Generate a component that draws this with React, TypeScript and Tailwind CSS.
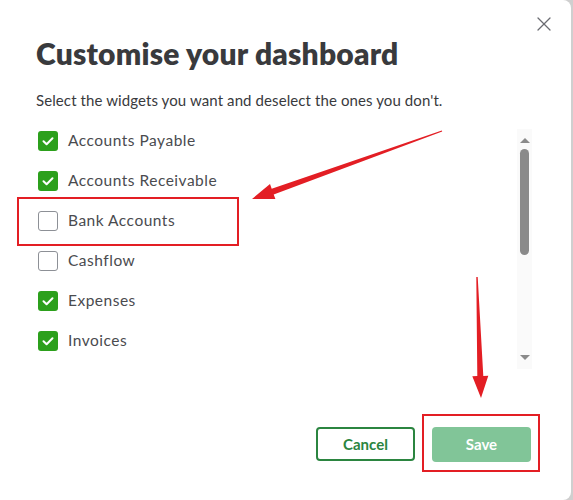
import { X } from 'lucide-react';

const widgets = [
  { label: 'Accounts Payable', checked: true },
  { label: 'Accounts Receivable', checked: true },
  { label: 'Bank Accounts', checked: false },
  { label: 'Cashflow', checked: false },
  { label: 'Expenses', checked: true },
  { label: 'Invoices', checked: true },
];

function Checkbox({ checked }: { checked: boolean }) {
  if (checked) {
    return (
      <div className="w-[20px] h-[20px] rounded-[3px] bg-[#2ca01c] flex items-center justify-center shrink-0">
        <svg width="20" height="20" viewBox="0 0 20 20">
          <path d="M5.5 10.2 L8.6 13.2 L14.5 7.2" fill="none" stroke="#fff" strokeWidth="2" strokeLinecap="round" strokeLinejoin="round" />
        </svg>
      </div>
    );
  }
  return <div className="w-[20px] h-[20px] rounded-[3px] border border-[#8d9096] bg-white shrink-0" />;
}

function Scrollbar() {
  return (
    <div className="w-[15px] h-[240px] mt-[8px] bg-[#fafafa] flex flex-col items-center shrink-0">
      <div className="mt-[9px] w-0 h-0 border-l-[5px] border-r-[5px] border-b-[5px] border-l-transparent border-r-transparent border-b-[#8a8a8a]" />
      <div className="mt-[6px] w-[9px] h-[106px] rounded-full bg-[#8a8a8a]" />
      <div className="flex-1" />
      <div className="mb-[9px] w-0 h-0 border-l-[5px] border-r-[5px] border-t-[5px] border-l-transparent border-r-transparent border-t-[#8a8a8a]" />
    </div>
  );
}

export default function App() {
  return (
    <div
      className="relative w-[573px] h-[500px] bg-[#cfcfcf] overflow-hidden"
      style={{ fontFamily: 'Lato, "Noto Sans", sans-serif' }}
    >
      <div className="relative w-[571px] h-[500px] bg-white rounded-r-[8px] pl-[36px] pr-[39px] pt-[35px] flex flex-col text-[#393a3d]">
        {/* Close */}
        <button className="absolute top-[12px] right-[15px] text-[#6b6c72]">
          <X className="w-[24px] h-[24px]" strokeWidth={1.3} />
        </button>

        <h1 className="text-[30px] leading-[36px] font-extrabold tracking-[0.2px]">Customise your dashboard</h1>
        <p className="mt-[19px] text-[15px] leading-[20px] tracking-[0.1px]">
          Select the widgets you want and deselect the ones you don't.
        </p>

        {/* Widget list */}
        <div className="mt-[11px] h-[250px] flex">
          <div className="flex-1 flex flex-col">
            {widgets.map((w) => (
              <div key={w.label} className="h-[40px] flex items-center pl-[2px] gap-[10px]">
                <Checkbox checked={w.checked} />
                <span className="text-[15.5px] text-[#4a4b4f] tracking-[0.5px]">{w.label}</span>
              </div>
            ))}
          </div>
          <Scrollbar />
        </div>

        {/* Footer buttons */}
        <div className="mt-[56px] flex justify-end gap-[17px] pr-[1px]">
          <button className="w-[99px] h-[34px] rounded-[4px] border-2 border-[#2b8540] text-[#2b8540] text-[15px] font-bold">
            Cancel
          </button>
          <button className="w-[99px] h-[35px] rounded-[4px] bg-[#81c598] text-white text-[15px] font-bold">
            Save
          </button>
        </div>
      </div>

      {/* Annotations */}
      <div className="absolute left-[17px] top-[197px] w-[222px] h-[49px] border-2 border-[#e31e24]" />
      <div className="absolute left-[422px] top-[414px] w-[118px] h-[58px] border-2 border-[#e31e24]" />
      <svg className="absolute left-0 top-0 pointer-events-none" width="573" height="500">
        <polygon
          points="442.2,131.5 273.7,194.4 275.4,199.1 252,199 270,184.1 271.7,188.8 441.8,130.5"
          fill="#e31e24"
        />
        <polygon
          points="476.3,277 477.7,277 483.3,375.9 488.3,375.7 481,398 472.3,376.3 477.3,376.1"
          fill="#e31e24"
        />
      </svg>
    </div>
  );
}
